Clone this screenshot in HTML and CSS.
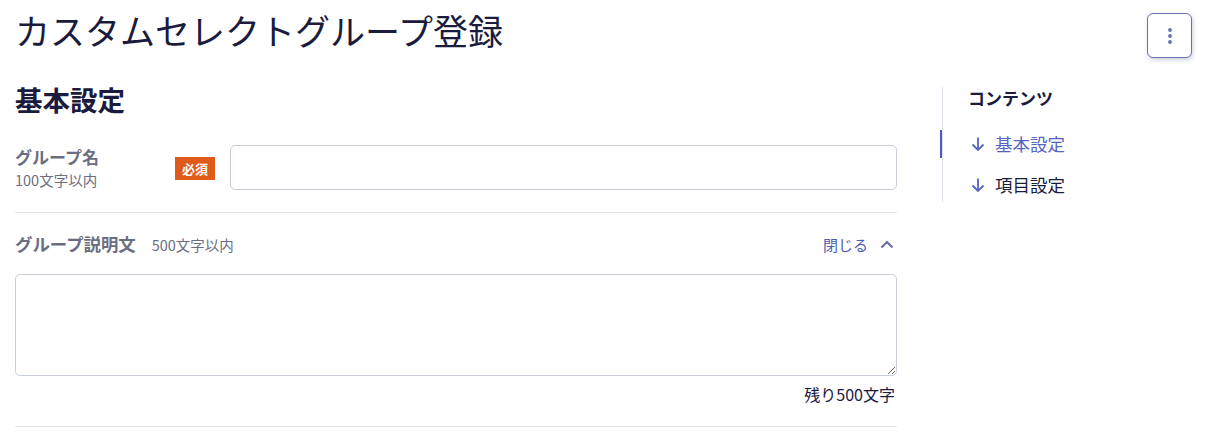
FILE: index.html
```html
<!DOCTYPE html>
<html lang="ja">
<head>
<meta charset="utf-8">
<link rel="stylesheet" href="styles.css">
</head>
<body>
<div class="page">
  <header class="header">
    <h1 class="title">カスタムセレクトグループ登録</h1>
    <button class="menu-btn" aria-label="メニュー">
      <svg width="4" height="16" viewBox="0 0 4 16"><circle cx="2" cy="2" r="1.9" fill="#6a70a8"/><circle cx="2" cy="8" r="1.9" fill="#6a70a8"/><circle cx="2" cy="14" r="1.9" fill="#6a70a8"/></svg>
    </button>
  </header>
  <div class="layout">
    <main class="main">
      <h2 class="section-title">基本設定</h2>
      <div class="row">
        <div class="label-box">
          <div class="label">グループ名</div>
          <div class="hint">100文字以内</div>
        </div>
        <span class="badge">必須</span>
        <input class="input" type="text">
      </div>
      <div class="divider"></div>
      <div class="desc-head">
        <div class="desc-label"><span class="label wide">グループ説明文</span><span class="hint inline">500文字以内</span></div>
        <button class="toggle">閉じる
          <svg width="14" height="9" viewBox="0 0 14 9"><path d="M1.5 7.5 L7 2 L12.5 7.5" fill="none" stroke="#6b72a0" stroke-width="2.2"/></svg>
        </button>
      </div>
      <textarea class="textarea"></textarea>
      <div class="counter">残り500文字</div>
      <div class="divider bottom"></div>
    </main>
    <aside class="toc">
      <div class="toc-title">コンテンツ</div>
      <a class="toc-item active" href="#">
        <svg width="14" height="16" viewBox="0 0 14 16"><path d="M7 1.5 V14 M1.5 8.5 L7 14 L12.5 8.5" fill="none" stroke="#5563c1" stroke-width="1.8"/></svg>
        <span>基本設定</span>
      </a>
      <a class="toc-item" href="#">
        <svg width="14" height="16" viewBox="0 0 14 16"><path d="M7 1.5 V14 M1.5 8.5 L7 14 L12.5 8.5" fill="none" stroke="#5563c1" stroke-width="1.8"/></svg>
        <span>項目設定</span>
      </a>
    </aside>
  </div>
</div>
</body>
</html>
```
FILE: styles.css
```css
* { box-sizing: border-box; }
html, body { margin: 0; padding: 0; background: #fff; }
body {
  font-family: "Noto Sans CJK JP", "Noto Sans", sans-serif;
  color: #1b1b3a;
}
.page { padding: 12px 13px 0 15px; }
.header {
  display: flex;
  justify-content: space-between;
  align-items: flex-start;
}
.title {
  margin: -4px 0 0 0;
  font-size: 35px;
  font-weight: 400;
  line-height: 44px;
  color: #1a1b3d;
}
.menu-btn {
  width: 45px;
  height: 45px;
  margin-top: 1px;
  border: 1px solid #6a70a8;
  border-radius: 6px;
  background: #fff;
  box-shadow: 1px 2px 4px rgba(60, 70, 120, 0.25);
  display: flex;
  align-items: center;
  justify-content: center;
  padding: 0;
}
.layout {
  display: flex;
  align-items: flex-start;
  margin-top: 29px;
}
.main { width: 882px; flex: none; }
.section-title {
  margin: -2px 0 0 0;
  font-size: 27.5px;
  font-weight: 700;
  line-height: 28px;
  color: #1a1b3d;
}
.row {
  display: flex;
  align-items: center;
  margin-top: 32px;
}
.label-box { width: 160px; }
.label {
  font-size: 17px;
  font-weight: 700;
  color: #6b6e82;
  line-height: 22px;
}
.label.wide { font-size: 17.4px; }
.hint {
  font-size: 14.5px;
  color: #6b6e82;
  line-height: 18px;
  margin-top: 3px;
}
.hint.inline { margin: 0 0 0 16px; }
.badge {
  background: #e05a1c;
  color: #fff;
  font-size: 13px;
  font-weight: 700;
  line-height: 23px;
  padding: 0 7px;
  margin-top: 2px;
}
.input {
  margin-left: 15px;
  flex: 1;
  height: 45px;
  border: 1px solid #c8cedc;
  border-radius: 5px;
  background: #fff;
}
.divider {
  height: 1px;
  background: #e4e5ec;
  margin-top: 22px;
}
.desc-head {
  display: flex;
  justify-content: space-between;
  align-items: center;
  margin-top: 20px;
}
.desc-label { display: flex; align-items: baseline; }
.toggle {
  border: 0;
  background: none;
  padding: 0 3px 0 0;
  font-family: inherit;
  font-size: 15px;
  color: #4f5cb8;
  display: flex;
  align-items: center;
  gap: 12px;
}
.textarea {
  display: block;
  width: 100%;
  height: 102px;
  margin-top: 19px;
  border: 1px solid #c8cedc;
  border-radius: 5px;
  resize: vertical;
}
.counter {
  text-align: right;
  font-size: 16px;
  color: #1a1b3d;
  margin-top: 7px;
  padding-right: 2px;
  line-height: 22px;
}
.divider.bottom { margin-top: 21px; }
.toc {
  margin-left: 45px;
  border-left: 1px solid #e2e3ec;
  padding: 0 0 0 25px;
  width: 250px;
}
.toc-title {
  font-size: 17px;
  font-weight: 700;
  line-height: 22px;
  margin-top: 0;
  color: #1a1b3d;
}
.toc-item {
  display: flex;
  align-items: center;
  gap: 10px;
  text-decoration: none;
  color: #1a1b3d;
  font-size: 17.5px;
  line-height: 28px;
  margin-top: 13px;
  position: relative;
  padding-left: 3px;
}
.toc-item.active { color: #5563c1; margin-top: 21px; }
.toc-item.active::before {
  content: "";
  position: absolute;
  left: -28px;
  top: 0;
  width: 2px;
  height: 28px;
  background: #4d58c0;
}
.toc-item:last-child { margin-bottom: 3px; }
```
